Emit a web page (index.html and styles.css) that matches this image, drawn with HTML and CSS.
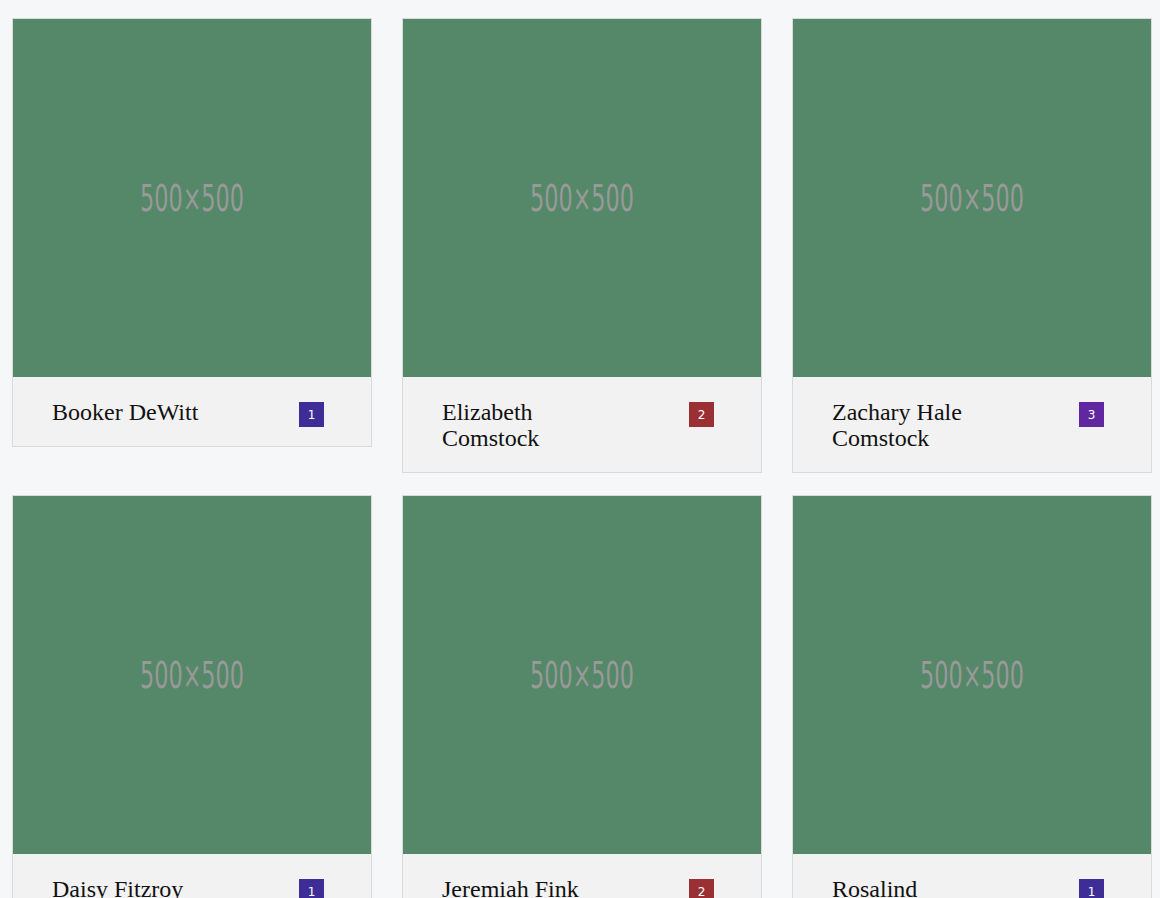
FILE: index.html
```html
<!DOCTYPE html>
<html>
<head>
<meta charset="utf-8">
<link rel="stylesheet" href="styles.css">
</head>
<body>
<div class="grid">
  <div class="card">
    <div class="thumb"><svg viewBox="0 0 358 358" width="358" height="358"><text x="179" y="192" text-anchor="middle" textLength="104" lengthAdjust="spacingAndGlyphs" class="ph">500×500</text></svg></div>
    <div class="foot"><span class="name">Booker DeWitt</span><span class="badge b1">1</span></div>
  </div>
  <div class="card">
    <div class="thumb"><svg viewBox="0 0 358 358" width="358" height="358"><text x="179" y="192" text-anchor="middle" textLength="104" lengthAdjust="spacingAndGlyphs" class="ph">500×500</text></svg></div>
    <div class="foot"><span class="name">Elizabeth Comstock</span><span class="badge b2">2</span></div>
  </div>
  <div class="card">
    <div class="thumb"><svg viewBox="0 0 358 358" width="358" height="358"><text x="179" y="192" text-anchor="middle" textLength="104" lengthAdjust="spacingAndGlyphs" class="ph">500×500</text></svg></div>
    <div class="foot"><span class="name">Zachary Hale Comstock</span><span class="badge b3">3</span></div>
  </div>
  <div class="card">
    <div class="thumb"><svg viewBox="0 0 358 358" width="358" height="358"><text x="179" y="192" text-anchor="middle" textLength="104" lengthAdjust="spacingAndGlyphs" class="ph">500×500</text></svg></div>
    <div class="foot"><span class="name">Daisy Fitzroy</span><span class="badge b1">1</span></div>
  </div>
  <div class="card">
    <div class="thumb"><svg viewBox="0 0 358 358" width="358" height="358"><text x="179" y="192" text-anchor="middle" textLength="104" lengthAdjust="spacingAndGlyphs" class="ph">500×500</text></svg></div>
    <div class="foot"><span class="name">Jeremiah Fink</span><span class="badge b2">2</span></div>
  </div>
  <div class="card">
    <div class="thumb"><svg viewBox="0 0 358 358" width="358" height="358"><text x="179" y="192" text-anchor="middle" textLength="104" lengthAdjust="spacingAndGlyphs" class="ph">500×500</text></svg></div>
    <div class="foot"><span class="name">Rosalind Lutece</span><span class="badge b1">1</span></div>
  </div>
</div>
</body>
</html>
```
FILE: styles.css
```css
html, body {
  margin: 0;
  padding: 0;
  background: #f6f7f9;
}
.grid {
  display: grid;
  grid-template-columns: repeat(3, 360px);
  column-gap: 30px;
  row-gap: 22px;
  align-items: start;
  padding: 18px 12px;
}
.card {
  border: 1px solid #dadada;
  background: #f2f2f2;
}
.thumb {
  height: 358px;
  background: #548868;
}
.thumb svg {
  display: block;
}
.ph {
  font-family: "DejaVu Sans Condensed", "DejaVu Sans", sans-serif;
  font-size: 38px;
  fill: #999999;
}
.foot {
  display: flex;
  align-items: flex-start;
  padding: 22px 47px 21px 39px;
}
.name {
  font-family: "Liberation Serif", serif;
  font-size: 24px;
  line-height: 26px;
  color: #111;
  max-width: 152px;
}
.badge {
  margin-left: auto;
  margin-top: 3px;
  margin-bottom: -3px;
  width: 25px;
  height: 25px;
  display: flex;
  align-items: center;
  justify-content: center;
  color: #fff;
  font-family: "DejaVu Sans", sans-serif;
  font-size: 12px;
}
.b1 { background: #3e2d96; }
.b2 { background: #9b3034; }
.b3 { background: #6127a0; }
```
